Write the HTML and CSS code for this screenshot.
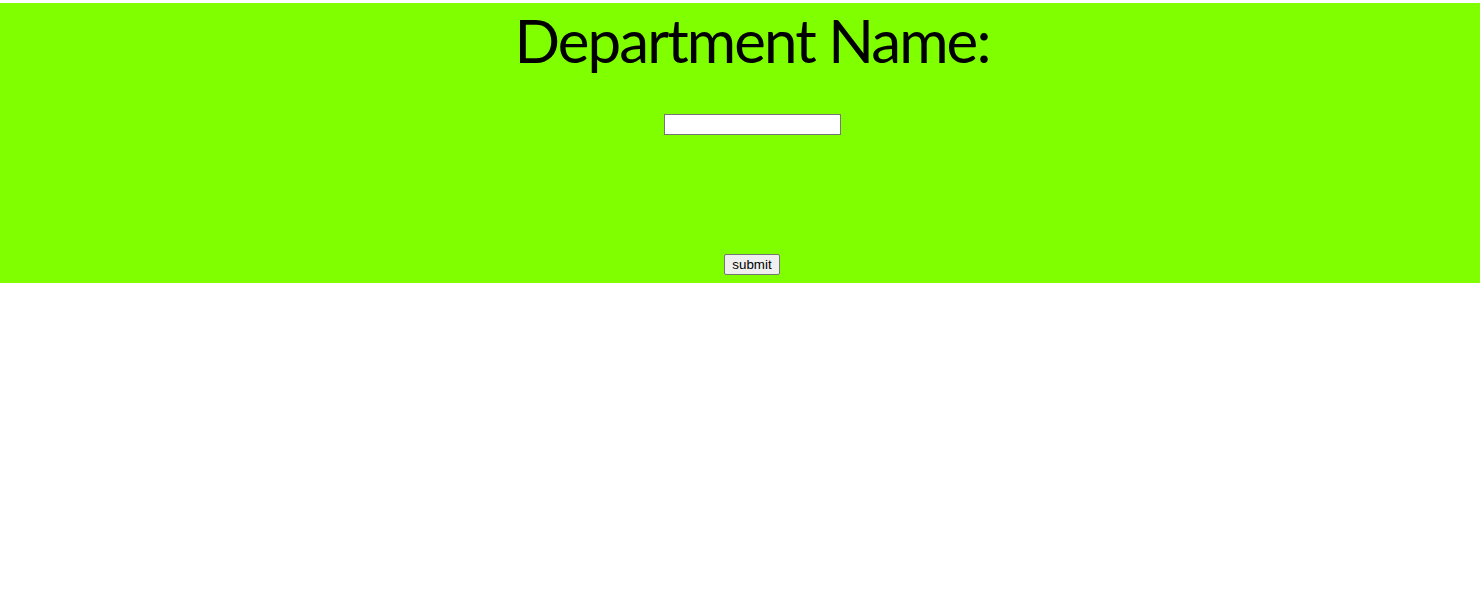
FILE: index.html
```html
<!DOCTYPE html>
<html>
<head>
<meta charset="utf-8">
<link rel="stylesheet" href="styles.css">
</head>
<body>
<form class="panel">
  <h1 class="title">Department Name:</h1>
  <div class="field"><input type="text" class="text-input"></div>
  <div class="actions"><button type="button" class="submit-btn">submit</button></div>
</form>
</body>
</html>
```
FILE: styles.css
```css
html, body { margin: 0; padding: 0; background: #fff; }
.panel {
  margin: 3px 0 0 0;
  height: 280px;
  background: #80ff00;
  padding-left: 24px;
  box-sizing: border-box;
  display: flex;
  flex-direction: column;
  align-items: center;
}
.title {
  margin: 0;
  padding-top: 1px;
  font-family: "Lato", "Open Sans", sans-serif;
  font-weight: 400;
  font-size: 60px;
  line-height: 72px;
  color: #000;
  letter-spacing: -1.9px;
}
.field { margin-top: 38px; }
.text-input {
  width: 177px;
  height: 21px;
  box-sizing: border-box;
  border: 1px solid #767676;
  padding: 1px 2px;
  font-family: "Liberation Sans", Arial, sans-serif;
  font-size: 13.33px;
  display: block;
}
.actions { margin-top: 119px; }
.submit-btn {
  display: block;
  width: 56px;
  height: 21px;
  box-sizing: border-box;
  font-family: "Liberation Sans", Arial, sans-serif;
  font-size: 13.33px;
  padding: 1px 6px;
  border: 1px solid #767676;
  border-radius: 2px;
  background: #efefef;
  color: #000;
}
```
